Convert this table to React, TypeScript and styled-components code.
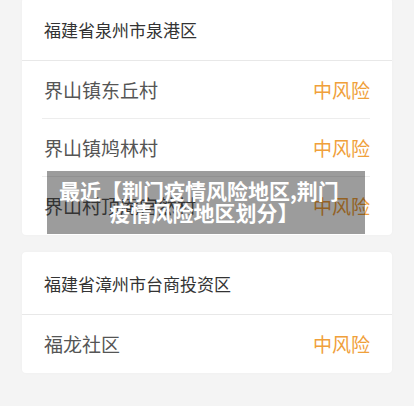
import React from 'react';
import styled, { createGlobalStyle } from 'styled-components';

type Row = {
  name: string;
  level: string;
};

type Group = {
  area: string;
  rows: Row[];
};

const groups: Group[] = [
  {
    area: '福建省泉州市泉港区',
    rows: [
      { name: '界山镇东丘村', level: '中风险' },
      { name: '界山镇鸠林村', level: '中风险' },
      { name: '界山村顶庵宫然村', level: '中风险' },
    ],
  },
  {
    area: '福建省漳州市台商投资区',
    rows: [{ name: '福龙社区', level: '中风险' }],
  },
];

const GlobalStyle = createGlobalStyle`
  html, body {
    margin: 0;
    padding: 0;
    background: #f4f4f4;
    font-family: "Noto Sans CJK SC", "Noto Sans", sans-serif;
  }
`;

const Page = styled.div`
  position: relative;
  width: 414px;
  height: 406px;
  overflow: hidden;
  background: #f4f4f4;
`;

const List = styled.div`
  display: flex;
  flex-direction: column;
  gap: 17px;
  padding: 0 22px;
  margin-top: -2px;
`;

const Card = styled.div`
  background: #ffffff;
  border-radius: 4px;
  box-shadow: 0 0 3px rgba(0, 0, 0, 0.03);
`;

const Header = styled.div`
  height: 62px;
  display: flex;
  align-items: center;
  padding: 0 22px;
  border-bottom: 1px solid #e8e8e8;
  font-size: 17px;
  color: #333333;
`;

const Item = styled.div<{ $last: boolean }>`
  height: 57px;
  margin: 0 22px 0 20px;
  display: flex;
  align-items: center;
  justify-content: space-between;
  border-bottom: 1px solid ${(p) => (p.$last ? 'transparent' : '#ededed')};
  font-size: 19px;
`;

const Name = styled.span`
  padding-left: 2px;
  color: #555555;
`;

const Level = styled.span`
  color: #f0a03a;
`;

const Caption = styled.div`
  position: absolute;
  left: 47px;
  top: 171px;
  width: 318px;
  height: 63px;
  box-sizing: border-box;
  padding: 8px 30px 0 12px;
  background: rgba(0, 0, 0, 0.39);
  color: #ffffff;
  font-weight: 700;
  font-size: 21px;
  line-height: 22px;
  text-align: center;
  white-space: nowrap;
`;

const CaptionLine = styled.span<{ $shift?: number }>`
  display: block;
  padding-left: ${(p) => p.$shift ?? 0}px;
`;

export default function App() {
  return (
    <Page>
      <GlobalStyle />
      <List>
        {groups.map((g) => (
          <Card key={g.area}>
            <Header>{g.area}</Header>
            {g.rows.map((r, i) => (
              <Item key={r.name} $last={i === g.rows.length - 1}>
                <Name>{r.name}</Name>
                <Level>{r.level}</Level>
              </Item>
            ))}
          </Card>
        ))}
      </List>
      <Caption>
        <CaptionLine>最近【荆门疫情风险地区,荆门</CaptionLine>
        <CaptionLine $shift={14}>疫情风险地区划分】</CaptionLine>
      </Caption>
    </Page>
  );
}
